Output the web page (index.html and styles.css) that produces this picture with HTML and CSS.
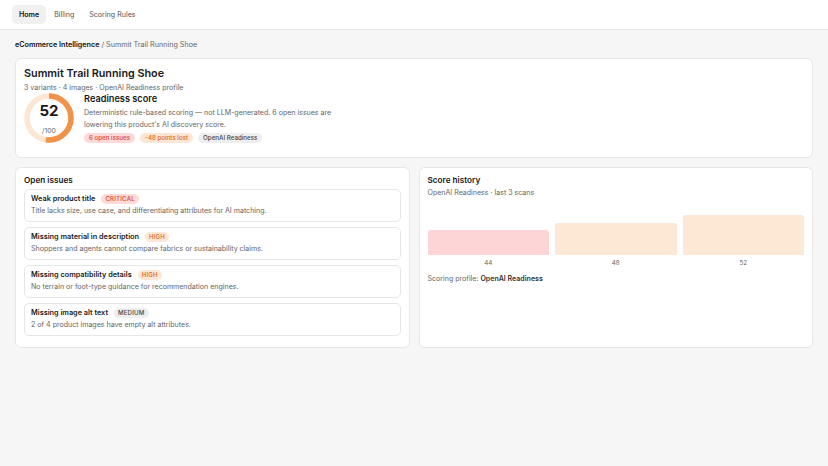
FILE: index.html
```html
<!DOCTYPE html>
<html lang="en">
<head>
    <meta charset="UTF-8">
    <meta name="viewport" content="width=device-width, initial-scale=1.0">
    <title>Summit Trail Running Shoe</title>
    <link rel="stylesheet" href="styles.css">
</head>
<body>
    <header class="nav">
        <a class="nav-link active" href="#">Home</a>
        <a class="nav-link" href="#">Billing</a>
        <a class="nav-link" href="#">Scoring Rules</a>
    </header>

    <main class="page">
        <p class="crumbs"><strong>eCommerce Intelligence</strong> / Summit Trail Running Shoe</p>

        <section class="card hero">
            <h1>Summit Trail Running Shoe</h1>
            <p class="muted">3 variants · 4 images · OpenAI Readiness profile</p>
            <div class="score-row">
                <div class="donut">
                    <svg width="50" height="50" viewBox="0 0 50 50">
                        <circle cx="25" cy="25" r="22" fill="none" stroke="#fde7d4" stroke-width="5.5"/>
                        <circle cx="25" cy="25" r="22" fill="none" stroke="#f0924a" stroke-width="5.5"
                                stroke-dasharray="71.9 138.2" transform="rotate(-90 25 25)"/>
                    </svg>
                    <div class="donut-text">
                        <span class="big">52</span>
                        <span class="small">/100</span>
                    </div>
                </div>
                <div class="score-info">
                    <h2>Readiness score</h2>
                    <p class="desc">Deterministic rule-based scoring — not LLM-generated. 6 open issues are lowering this product's AI discovery score.</p>
                    <div class="badges">
                        <span class="badge red">6 open issues</span>
                        <span class="badge orange">-48 points lost</span>
                        <span class="badge gray">OpenAI Readiness</span>
                    </div>
                </div>
            </div>
        </section>

        <div class="columns">
            <section class="card">
                <h3>Open issues</h3>
                <div class="issue">
                    <div class="issue-head">Weak product title <span class="tag red">CRITICAL</span></div>
                    <p class="muted">Title lacks size, use case, and differentiating attributes for AI matching.</p>
                </div>
                <div class="issue">
                    <div class="issue-head">Missing material in description <span class="tag orange">HIGH</span></div>
                    <p class="muted">Shoppers and agents cannot compare fabrics or sustainability claims.</p>
                </div>
                <div class="issue">
                    <div class="issue-head">Missing compatibility details <span class="tag orange">HIGH</span></div>
                    <p class="muted">No terrain or foot-type guidance for recommendation engines.</p>
                </div>
                <div class="issue">
                    <div class="issue-head">Missing image alt text <span class="tag gray">MEDIUM</span></div>
                    <p class="muted">2 of 4 product images have empty alt attributes.</p>
                </div>
            </section>

            <section class="card history">
                <h3>Score history</h3>
                <p class="muted">OpenAI Readiness · last 3 scans</p>
                <div class="chart">
                    <div class="col"><div class="bar low" style="height: 25px"></div><span>44</span></div>
                    <div class="col"><div class="bar" style="height: 32px"></div><span>48</span></div>
                    <div class="col"><div class="bar" style="height: 40px"></div><span>52</span></div>
                </div>
                <p class="muted">Scoring profile: <strong>OpenAI Readiness</strong></p>
            </section>
        </div>
    </main>
</body>
</html>
```

FILE: styles.css
```css
* {
    box-sizing: border-box;
}
body {
    margin: 0;
    font-family: Inter, "Noto Sans", sans-serif;
    background-color: #f6f6f6;
    color: #1a1a1a;
    height: 466px;
}
p, h1, h2, h3 {
    margin: 0;
}
.nav {
    height: 30px;
    background: white;
    border-bottom: 1px solid #e6e6e6;
    display: flex;
    align-items: center;
    gap: 1px;
    padding-left: 12px;
}
.nav-link {
    font-size: 7.1px;
    color: #555;
    text-decoration: none;
    padding: 5px 7px;
    border-radius: 5px;
}
.nav-link.active {
    background: #f0f0f0;
    color: #111;
    font-weight: 600;
}
.page {
    padding: 10px 15px;
}
.crumbs {
    font-size: 7.2px;
    color: #666;
    line-height: 10px;
}
.crumbs strong {
    color: #111;
    font-weight: 600;
}
.card {
    background: white;
    border: 1px solid #e6e6e6;
    border-radius: 6px;
    padding: 8px 8px 11px;
}
.muted {
    font-size: 7.05px;
    color: #666;
    line-height: 12px;
}
.hero {
    margin-top: 8px;
    padding-bottom: 14px;
}
.hero h1 {
    font-size: 10.8px;
    font-weight: 600;
    line-height: 14px;
}
.hero .muted {
    margin-top: 1px;
}
.score-row {
    display: flex;
    gap: 10px;
    margin-top: -1px;
}
.donut {
    position: relative;
    width: 50px;
    height: 50px;
}
.donut-text {
    position: absolute;
    inset: 0;
    display: flex;
    flex-direction: column;
    align-items: center;
}
.donut-text .big {
    font-size: 15px;
    font-weight: 700;
    margin-top: 9px;
    line-height: 18px;
}
.donut-text .small {
    font-size: 6.8px;
    color: #666;
    margin-top: 6px;
}
.score-info h2 {
    font-size: 9.2px;
    font-weight: 600;
    line-height: 12px;
}
.desc {
    font-size: 7.05px;
    color: #666;
    line-height: 12px;
    max-width: 252px;
    margin-top: 2px;
}
.badges {
    display: flex;
    gap: 5px;
    margin-top: 2px;
}
.badge {
    font-size: 6.2px;
    font-weight: 500;
    padding: 1px 5px;
    border-radius: 6px;
    line-height: 8px;
}
.red {
    background: #fdd9d9;
    color: #d9432f;
}
.orange {
    background: #fde6d3;
    color: #dd6420;
}
.gray {
    background: #eeeeef;
    color: #444;
}
.columns {
    display: grid;
    grid-template-columns: 1fr 1fr;
    gap: 9px;
    margin-top: 9px;
}
.columns .card {
    padding-top: 7px;
}
.card h3 {
    font-size: 8.2px;
    font-weight: 600;
    line-height: 10px;
    margin-bottom: 4px;
}
.issue {
    border: 1px solid #e6e6e6;
    border-radius: 5px;
    padding: 3px 6px 4px;
    margin-bottom: 5px;
}
.issue:last-child {
    margin-bottom: 0;
}
.issue-head {
    font-size: 7.3px;
    font-weight: 600;
    line-height: 12px;
    display: flex;
    align-items: center;
    gap: 6px;
}
.tag {
    font-size: 6.1px;
    font-weight: 500;
    letter-spacing: 0.2px;
    padding: 0 4px;
    border-radius: 5px;
    line-height: 10px;
}
.history h3 {
    margin-bottom: 2px;
}
.chart {
    display: flex;
    gap: 6px;
    align-items: flex-end;
    height: 69px;
}
.col {
    flex: 1;
    display: flex;
    flex-direction: column;
    align-items: center;
}
.bar {
    width: 100%;
    background: #fde8d6;
    border-radius: 3px 3px 0 0;
}
.bar.low {
    background: #fdd5d6;
}
.col span {
    font-size: 6.3px;
    color: #666;
    line-height: 10px;
    margin-top: 3px;
}
.history .chart + .muted {
    margin-top: 5px;
}
.history strong {
    color: #333;
    font-weight: 600;
}
```
